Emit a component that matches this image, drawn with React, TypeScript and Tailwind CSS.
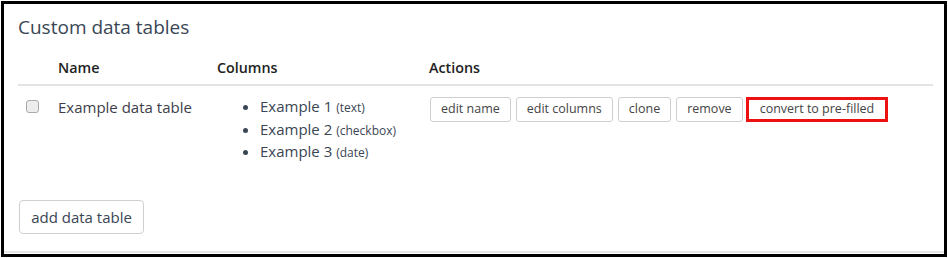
import React from "react";

const font = { fontFamily: '"Open Sans", "Liberation Sans", sans-serif' };

function Btn({ children, red }: { children: React.ReactNode; red?: boolean }) {
  return (
    <button
      className={
        red
          ? "h-[25px] -ml-[2px] px-[11px] border-[3px] border-[#ee1111] bg-white text-[12.5px] leading-none text-[#444] rounded-none"
          : "h-[25px] px-[10px] border border-[#cfcfcf] bg-white text-[12.5px] leading-none text-[#444] rounded-[3px]"
      }
    >
      {children}
    </button>
  );
}

export default function App() {
  const cols = [
    ["Example 1", "(text)"],
    ["Example 2", "(checkbox)"],
    ["Example 3", "(date)"],
  ];
  return (
    <div className="w-[948px] h-[258px] bg-white pt-px pl-px" style={font}>
      <div className="w-[946px] h-[256px] border-[3px] border-black flex flex-col text-[#333]">
        <div className="flex-1 flex flex-col pl-[14px] pr-[11px]">
          <h2 className="mt-[10px] text-[19px] leading-[26px] text-[#3a4654]">Custom data tables</h2>
          <div className="mt-[16px] grid grid-cols-[40px_159px_212px_1fr] h-[24px] items-center text-[14.3px] font-semibold text-[#222]">
            <div />
            <div>Name</div>
            <div>Columns</div>
            <div>Actions</div>
          </div>
          <div className="mt-[4px] h-[2px] bg-[#e4e4e4]" />
          <div className="grid grid-cols-[40px_159px_212px_1fr] pt-[9px] text-[15px]">
            <div className="pl-[8px] pt-[5px]">
              <div className="w-[13px] h-[13px] rounded-[3px] border border-[#aaa] bg-[#ededed]" />
            </div>
            <div className="leading-[22px] pt-[1px] text-[#3d3d4a]">Example data table</div>
            <ul className="list-disc pl-[43px] leading-[21.5px] pt-[1px] text-[#3a4654]">
              {cols.map(([a, b]) => (
                <li key={a}>
                  {a} <span className="text-[12px]">{b}</span>
                </li>
              ))}
            </ul>
            <div className="flex gap-[5px] pl-[1px] pt-[2px]">
              <Btn>edit name</Btn>
              <Btn>edit columns</Btn>
              <Btn>clone</Btn>
              <Btn>remove</Btn>
              <Btn red>convert to pre-filled</Btn>
            </div>
          </div>
          <div className="mt-auto mb-[17px] ml-px">
            <button className="h-[34px] w-[125px] border border-[#cfcfcf] rounded-[4px] bg-white text-[15px] text-[#3a4654]">
              add data table
            </button>
          </div>
        </div>
        <div className="h-[2px] bg-[#e6e6e6]" />
        <div className="h-px" />
      </div>
    </div>
  );
}
